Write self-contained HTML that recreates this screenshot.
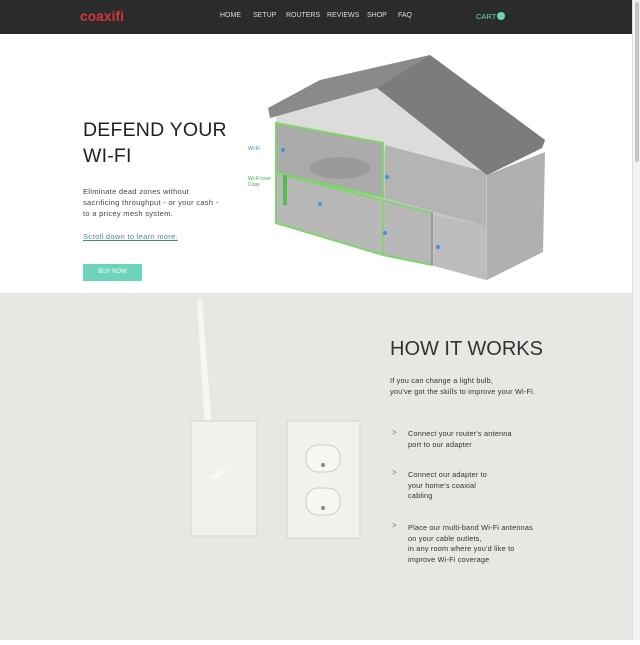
<!DOCTYPE html>
<html><head><meta charset="utf-8"><style>
*{margin:0;padding:0;box-sizing:border-box}
body{width:640px;height:640px;overflow:hidden;background:#fff;font-family:"Liberation Sans",sans-serif;position:relative}
.nav{position:absolute;left:0;top:0;width:632px;height:34px;background:#2b2b2b}
.logo{position:absolute;left:80px;top:9px;color:#d7373a;font-size:13.5px;font-weight:bold;letter-spacing:0.2px}
.menu{position:absolute;top:12px;font-size:7px;color:#ddd}
.cart{position:absolute;left:476px;top:12px;font-size:7.5px;color:#6cd3b6}
.badge{display:inline-block;width:8px;height:8px;border-radius:50%;background:#6cd3b6;vertical-align:-1px;margin-left:1px}
.sb{position:absolute;left:632px;top:0;width:8px;height:640px;background:#f4f4f4;border-left:1px solid #ddd}
.sb i{position:absolute;left:2px;top:2px;width:4px;height:160px;background:#c4c4c4;border-radius:2px}
h1{position:absolute;left:83px;top:117px;font-weight:normal;font-size:19.5px;line-height:26px;color:#222;letter-spacing:0.2px}
.p{position:absolute;left:83px;top:186px;font-size:7.5px;line-height:11px;color:#444;letter-spacing:0.3px}
.lnk{position:absolute;left:83px;top:232px;font-size:7.5px;color:#4a8a8a;text-decoration:underline;letter-spacing:0.3px}
.btn{position:absolute;left:83px;top:264px;width:59px;height:17px;background:#6dd4bb;color:#fff;font-size:6px;text-align:center;line-height:17px}
.sec{position:absolute;left:0;top:293px;width:632px;height:347px;background:#e9e7e3}
h2{position:absolute;left:390px;top:338px;font-weight:normal;font-size:20px;color:#333}
.t{position:absolute;font-size:7.3px;line-height:10.5px;color:#333;letter-spacing:0.2px}
.ch{position:absolute;left:392px;font-size:8px;color:#777}
</style></head><body>
<div class="nav">
<div class="logo">coaxifi</div>
<span class="menu" style="left:220px">HOME</span>
<span class="menu" style="left:253px">SETUP</span>
<span class="menu" style="left:286px">ROUTERS</span>
<span class="menu" style="left:327px">REVIEWS</span>
<span class="menu" style="left:367px">SHOP</span>
<span class="menu" style="left:398px">FAQ</span>
<span class="cart">CART<span class="badge"></span></span>
</div>
<h1>DEFEND YOUR<br>WI-FI</h1>
<div class="p">Eliminate dead zones without<br>sacrificing throughput - or your cash -<br>to a pricey mesh system.</div>
<div class="lnk">Scroll down to learn more.</div>
<div class="btn">BUY NOW</div>
<div style="position:absolute;left:248px;top:146px;font-size:5px;color:#3a7fd0">Wi-Fi</div>
<div style="position:absolute;left:248px;top:176px;font-size:5px;line-height:6px;color:#3cb04a">Wi-Fi over<br>Coax</div>
<svg style="position:absolute;left:0;top:0" width="632" height="293">
<polygon points="276,115 377,88 487,175 487,280 277,223" fill="#c6c6c6"/>
<polygon points="487,175 545,152 543,252 487,280" fill="#b0b0b0"/>
<polygon points="276,115 377,88 487,175 432,165 276,123" fill="#dcdcdc"/>
<polygon points="276,123 383,143 383,197 276,173" fill="#ababab" stroke="#80d46c" stroke-width="2"/>
<polygon points="385,145 486,172 486,226 385,198" fill="#b4b4b4"/>
<polygon points="276,173 432,213 432,265 383,255 276,223" fill="#b8b8b8" stroke="#80d46c" stroke-width="2"/>
<polygon points="383,200 383,255" fill="none" stroke="#80d46c" stroke-width="1.5"/>
<line x1="383" y1="208" x2="383" y2="255" stroke="#80d46c" stroke-width="1.5"/>
<line x1="432" y1="213" x2="432" y2="265" stroke="#999" stroke-width="2"/>
<polygon points="434,215 486,226 486,280 434,266" fill="#bdbdbd"/>
<polygon points="268,108 320,80 430,55 545,140 542,148 487,175 377,88 270,118" fill="#8a8a8a"/>
<polygon points="377,88 430,55 545,140 542,148 487,175" fill="#7c7c7c"/>
<ellipse cx="340" cy="168" rx="30" ry="11" fill="#9a9a9a"/>
<rect x="283" y="175" width="4" height="30" fill="#4fc04a"/>
<circle cx="283" cy="150" r="2" fill="#4a90d9"/><circle cx="387" cy="177" r="2" fill="#4a90d9"/>
<circle cx="320" cy="204" r="2" fill="#4a90d9"/><circle cx="385" cy="233" r="2" fill="#4a90d9"/>
<circle cx="438" cy="247" r="2" fill="#4a90d9"/>
</svg>
<div class="sec">
<svg width="632" height="347">
<polygon points="197,6 202,6 216,186 208,188" fill="#f7f6f3"/>
<rect x="191" y="128" width="66" height="115" fill="#f3f1ec" stroke="#d8d5cf"/>
<polygon points="205,186 216,186 228,178 222,176" fill="#f9f8f5"/>
<rect x="287" y="128" width="73" height="117" fill="#f3f1ec" stroke="#d6d3cd"/>
<rect x="306" y="152" width="34" height="27" rx="12" fill="#f7f6f2" stroke="#ccc"/>
<rect x="306" y="195" width="34" height="27" rx="12" fill="#f7f6f2" stroke="#ccc"/>
<circle cx="323" cy="172" r="2" fill="#888"/><circle cx="323" cy="215" r="2" fill="#888"/>
</svg>
</div>
<h2>HOW IT WORKS</h2>
<div class="t" style="left:390px;top:376px">If you can change a light bulb,<br>you've got the skills to improve your Wi-Fi.</div>
<span class="ch" style="top:428px">&gt;</span>
<div class="t" style="left:408px;top:429px">Connect your router's antenna<br>port to our adapter</div>
<span class="ch" style="top:468px">&gt;</span>
<div class="t" style="left:408px;top:470px">Connect our adapter to<br>your home's coaxial<br>cabling</div>
<span class="ch" style="top:521px">&gt;</span>
<div class="t" style="left:408px;top:523px">Place our multi-band Wi-Fi antennas<br>on your cable outlets,<br>in any room where you'd like to<br>improve Wi-Fi coverage</div>
<div class="sb"><i></i></div>
</body></html>
